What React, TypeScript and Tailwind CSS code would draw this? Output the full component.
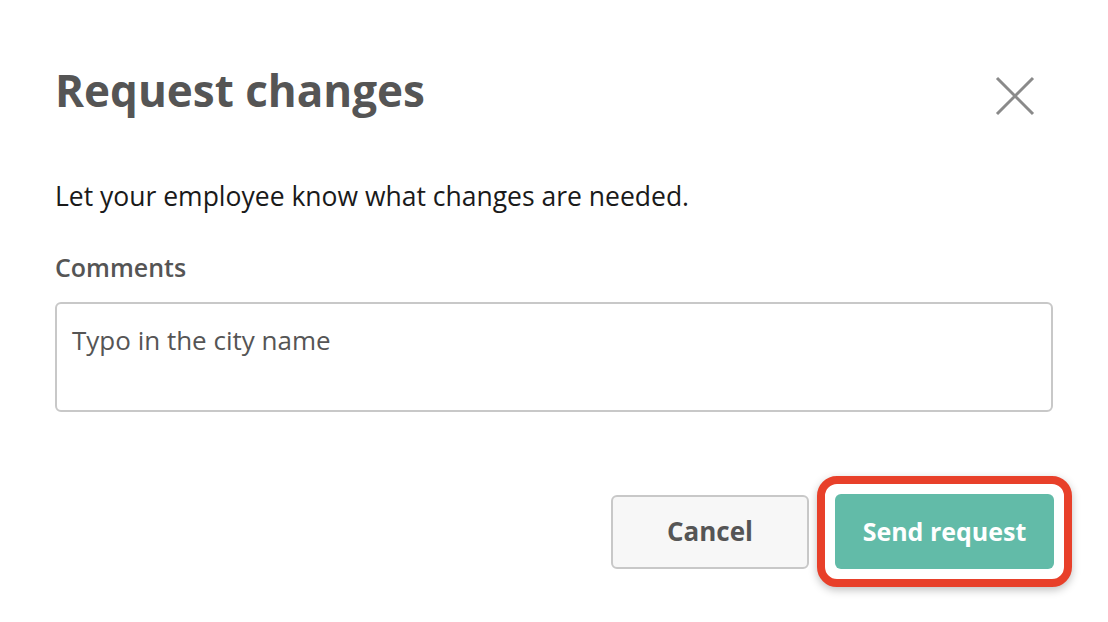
export default function App() {
  return (
    <div className="min-h-[622px] w-full bg-white font-['Open_Sans',sans-serif]">
      <div className="px-[55px] pt-[64px]">
        <div className="flex items-start justify-between">
          <h1 className="text-[44px] font-bold leading-[52px] text-[#555555]">Request changes</h1>
          <button type="button" className="mr-[18px] mt-[12px] text-[#8a8a8a]">
            <svg width="40" height="40" viewBox="0 0 40 40" fill="none" stroke="currentColor" strokeWidth="3">
              <path d="M2 2 L38 38 M38 2 L2 38" />
            </svg>
          </button>
        </div>

        <p className="mt-[64px] text-[26.5px] leading-[32px] text-[#1a1a1a]">
          Let your employee know what changes are needed.
        </p>

        <label className="mt-[40px] block text-[25px] font-semibold leading-[30px] text-[#555555]">
          Comments
        </label>

        <div className="mt-[20px] h-[110px] rounded-[6px] border-2 border-[#c8c8c8] px-[15px] pt-[20px] text-[26px] leading-[32px] text-[#555555]">
          Typo in the city name
        </div>

        <div className="mt-[64px] flex items-center justify-end gap-2">
          <button
            type="button"
            className="h-[74px] w-[198px] rounded-[6px] border-2 border-[#c8c8c8] bg-[#f7f7f7] text-[26px] font-bold text-[#555555]"
          >
            Cancel
          </button>
          <div className="-mr-[19px] rounded-[20px] border-[8px] border-[#e8402a] bg-white p-[10px] shadow-[0_3px_8px_rgba(0,0,0,0.25)]">
            <button
              type="button"
              className="h-[75px] w-[219px] rounded-[6px] bg-[#62bba8] text-[25px] font-bold text-white"
            >
              Send request
            </button>
          </div>
        </div>
      </div>
    </div>
  );
}
